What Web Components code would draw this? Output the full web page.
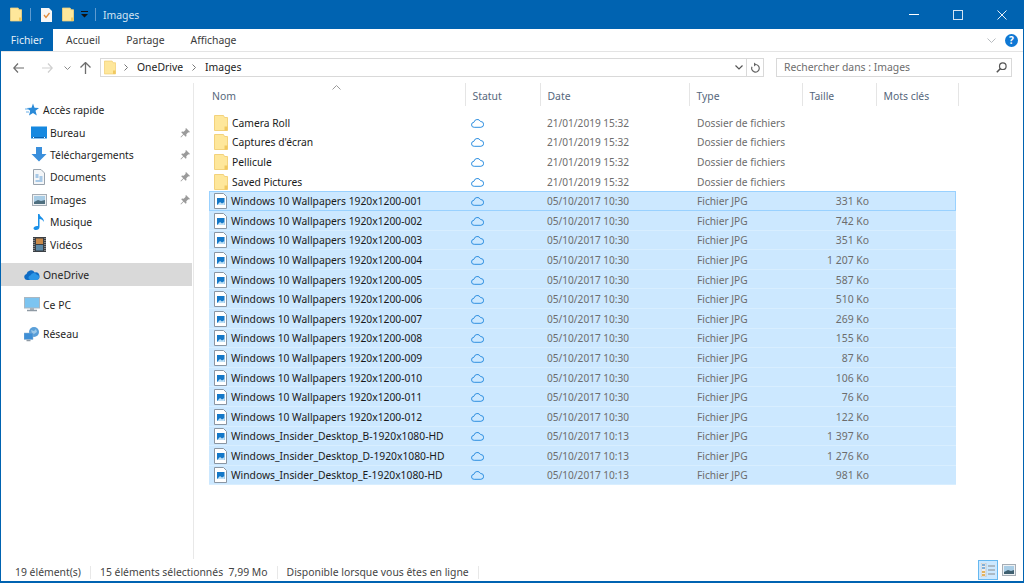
<!DOCTYPE html>
<html lang="fr">
<head>
<meta charset="utf-8">
<title>Images</title>
<style>
  html, body { margin: 0; height: 100%; background: #fff; overflow: hidden; }
  body { font: 10.4px "Noto Sans", "Open Sans", sans-serif; color: #1a1a1a; }
</style>
</head>
<body>
<explorer-window>
  <title-bar>Images</title-bar>
  <ribbon-tabs></ribbon-tabs>
  <address-row></address-row>
  <nav-pane slot="body">
    <nav-item icon="star" level="0">Accès rapide</nav-item>
    <nav-item icon="desktop" level="1" pinned>Bureau</nav-item>
    <nav-item icon="download" level="1" pinned>Téléchargements</nav-item>
    <nav-item icon="docs" level="1" pinned>Documents</nav-item>
    <nav-item icon="pics" level="1" pinned>Images</nav-item>
    <nav-item icon="music" level="1">Musique</nav-item>
    <nav-item icon="film" level="1">Vidéos</nav-item>
    <nav-item icon="cloud" level="0" active class="gap">OneDrive</nav-item>
    <nav-item icon="pc" level="0" class="gap">Ce PC</nav-item>
    <nav-item icon="net" level="0" class="gap">Réseau</nav-item>
  </nav-pane>
  <file-list slot="list"></file-list>
  <status-bar slot="status"></status-bar>
</explorer-window>

<script>
// icons shared by the elements
const FOLDER = `<svg width="14" height="16" viewBox="0 0 14 16"><path d="M.5.5h9l1 2h3v13H.5z" fill="#fee79b" stroke="#f3d27c"/><path d="M10.500 11.500h3v4h-3z" fill="#f0c860"/></svg>`;
const SMALL_FOLDER = FOLDER.replace('width="14" height="16"', 'width="12" height="15"');
const JPG = `<svg width="13" height="16" viewBox="0 0 13 16"><path d="M.5.5h9l3 3v12H.5z" fill="#fff" stroke="#8a96a3"/><rect x="3" y="5" width="7.500" height="7" fill="#1478c8"/><path d="M3 12l3-3 2 1.500 2.500-1.500v3z" fill="#bfe0f5"/></svg>`;
const CLOUD = `<svg width="13" height="10" viewBox="0 0 13 10"><path d="M3.200 9.300a2.500 2.500 0 0 1-.3-5A3.500 3.500 0 0 1 9.500 3.500a2.900 2.900 0 0 1 .4 5.800z" fill="none" stroke="#2f8fe0"/></svg>`;
const CHEVRON = `<svg width="4" height="7" viewBox="0 0 4 7"><path d="M.5.500l3 3-3 3" fill="none" stroke="#777"/></svg>`;
const ICONS = {
  star: `<svg width="14" height="14" viewBox="0 0 14 14"><path d="M8 .5l1.500 4.300L14 5l-3.500 2.800 1.300 4.700L8 10l-4 2.500 1.200-4.700L1.800 5l4.700-.2z" fill="#2a8ad8"/><path d="M0 6h4M1 9h3" stroke="#6ab0e8"/></svg>`,
  desktop: `<svg width="16" height="13" viewBox="0 0 16 13"><rect width="16" height="12" y=".5" fill="#1588e0"/><path d="M1 11.500h14" stroke="#0a62b0"/><path d="M2 11.500h1M13 11.500h1" stroke="#fff"/></svg>`,
  download: `<svg width="16" height="15" viewBox="0 0 16 15"><path d="M5 0h6v7h4.500L8 14.500.5 7H5z" fill="#3a8fdc"/></svg>`,
  docs: `<svg width="12" height="16" viewBox="0 0 12 16"><path d="M.5.5h7.500l3.500 3.500v11.500H.5z" fill="#f4f6f8" stroke="#98a2ac"/><path d="M2.500 6h3M6.500 8h3M2.500 8h3M6.500 10h3M2.500 12h7" stroke="#5b9bd5"/></svg>`,
  pics: `<svg width="15" height="12" viewBox="0 0 15 12"><rect x=".5" y=".5" width="14" height="11" fill="#eef1f3" stroke="#a5adb5"/><rect x="2" y="2" width="11" height="8" fill="#a9cde6"/><path d="M2 8l4-2 3 1 4-1v4H2z" fill="#4f6f7f"/></svg>`,
  music: `<svg width="12" height="16" viewBox="0 0 12 16"><path d="M5 0h1.500c.3 3 4.500 3.500 4.500 8-1-2-2.800-2.900-4.500-3v8c0 1.700-1.500 3-3.500 3-1.500 0-2.500-.8-2.500-1.800C.5 12.800 2.800 11.500 5 12z" fill="#1a90e8"/></svg>`,
  film: `<svg width="13" height="15" viewBox="0 0 13 15"><rect width="13" height="15" fill="#3a3f44"/><rect x="3" y="1.500" width="7" height="5.500" fill="#c98a4a"/><rect x="3" y="8" width="7" height="5.500" fill="#5d8aa8"/><path d="M1 1v13M12 1v13" stroke="#ccc" stroke-dasharray="1 1"/></svg>`,
  cloud: `<svg width="16" height="11" viewBox="0 0 16 11"><path d="M3 11a3 3 0 0 1-.5-5.900A4.500 4.500 0 0 1 10.700 3.400 3.800 3.800 0 0 1 12.500 11z" fill="#0f6cc4"/><path d="M6 11a2.500 2.500 0 0 1 .6-4.800 3.500 3.500 0 0 1 6.300-.5A2.700 2.700 0 0 1 13 11z" fill="#2b96e6"/></svg>`,
  pc: `<svg width="16" height="15" viewBox="0 0 16 15"><rect x=".5" y=".5" width="15" height="10.500" fill="#7cc4f0" stroke="#a9b7c2"/><path d="M6 11h4v2H6z" fill="#aab4bc"/><path d="M3 13.500h10" stroke="#8f9aa4" stroke-width="1.500"/></svg>`,
  net: `<svg width="16" height="15" viewBox="0 0 16 15"><circle cx="10" cy="5" r="5" fill="#5a9fd8"/><path d="M7 3l3 1 2-2 1 3-3 2-2-1z" fill="#9cc9ea"/><rect x="0" y="6" width="9" height="6.500" fill="#3f8fd6" stroke="#8fb4d2" stroke-width=".5"/><path d="M2.500 13.500h4" stroke="#8f9aa4" stroke-width="1.500"/></svg>`
};
const PIN = `<svg width="10" height="10" viewBox="0 0 10 10"><path d="M6 0l4 4-1 .6-.7-.3-2 2 .2 1.700-.8.8-2-2L1 9.500.5 9l2.700-2.700-2-2 .8-.8 1.700.2 2-2-.3-.7z" fill="#9a9a9a"/></svg>`;

class ExplorerWindow extends HTMLElement {
  constructor() {
    super();
    this.attachShadow({mode: 'open'}).innerHTML = `
    <style>
      :host { display: flex; flex-direction: column; box-sizing: border-box; height: 583px; width: 1024px; border: solid #0063b1; border-width: 0 1px 2px 1px; background: #fff; }
      .main { flex: 1; display: flex; min-height: 0; }
    </style>
    <slot></slot>
    <div class="main"><slot name="body"></slot><slot name="list"></slot></div>
    <slot name="status"></slot>`;
  }
}

class TitleBar extends HTMLElement {
  constructor() {
    super();
    this.attachShadow({mode: 'open'}).innerHTML = `
    <style>
      :host { display: flex; align-items: center; height: 29px; margin: 0 -1px; padding-left: 10px; background: #0063b1; color: #d4e4f2; flex: none; }
      .f { display: flex; }
      .sep { width: 1px; height: 13px; background: #5f9bd0; }
      .win { margin-left: auto; display: flex; align-items: center; }
      .win span { width: 44px; display: flex; justify-content: center; }
      .title { margin-left: 7px; }
    </style>
    <span class="f">${SMALL_FOLDER}</span>
    <span class="sep" style="margin-left:8px"></span>
    <span class="f" style="margin-left:10px"><svg width="11" height="15" viewBox="0 0 11 15"><path d="M0 1h8l3 3v11H0z" fill="#f6f6f6"/><path d="M3 8l2 2.500L8.500 6" fill="none" stroke="#e08a3a" stroke-width="1.300"/></svg></span>
    <span class="f" style="margin-left:10px">${SMALL_FOLDER}</span>
    <svg style="margin-left:7px" width="7" height="7" viewBox="0 0 7 7"><path d="M0 0h7v1H0zM0 3h7L3.500 6.500z" fill="#111"/></svg>
    <span class="sep" style="margin-left:7px"></span>
    <span class="title"><slot></slot></span>
    <span class="win">
      <span><svg width="10" height="1"><rect width="10" height="1" fill="#fff"/></svg></span>
      <span><svg width="10" height="10"><rect x=".5" y=".5" width="9" height="9" fill="none" stroke="#d4e4f2"/></svg></span>
      <span><svg width="10" height="10"><path d="M.5.5l9 9M9.500.5l-9 9" stroke="#e8f0f8"/></svg></span>
    </span>`;
  }
}

class RibbonTabs extends HTMLElement {
  constructor() {
    super();
    this.attachShadow({mode: 'open'}).innerHTML = `
    <style>
      :host { display: flex; align-items: center; gap: 26px; height: 22px; flex: none; border-bottom: 1px solid #e4e4e4; color: #3a3a3a; }
      .file { align-self: stretch; width: 52px; margin-right: -13px; display: flex; align-items: center; justify-content: center; background: #0063b1; color: #e6eff7; }
      .right { margin-left: auto; display: flex; align-items: center; gap: 9px; padding-right: 5px; }
      .help { width: 13px; height: 13px; border-radius: 50%; background: #0f78d4; color: #fff; font: bold 10px/13px "Noto Sans", sans-serif; text-align: center; }
    </style>
    <span class="file">Fichier</span>
    <span>Accueil</span>
    <span>Partage</span>
    <span>Affichage</span>
    <span class="right">
      <svg width="9" height="5" viewBox="0 0 9 5"><path d="M.5.500l4 4 4-4" fill="none" stroke="#b8bcc0"/></svg>
      <span class="help">?</span>
    </span>`;
  }
}

class AddressRow extends HTMLElement {
  constructor() {
    super();
    this.attachShadow({mode: 'open'}).innerHTML = `
    <style>
      :host { display: flex; align-items: center; height: 31px; flex: none; color: #222; }
      .nav { width: 99px; height: 20px; display: flex; align-items: center; padding-left: 12px; box-sizing: border-box; }
      .box { height: 19px; border: 1px solid #d9d9d9; display: flex; align-items: center; line-height: 17px; }
      .path { width: 664px; box-sizing: border-box; padding-left: 3px; }
      .chev { display: flex; margin: 0 9px 0 8px; }
      .chev + span + .chev { margin: 0 9px; }
      .end { margin-left: auto; display: flex; align-items: center; align-self: stretch; }
      .end span { display: flex; align-items: center; justify-content: center; }
      .search { width: 236px; box-sizing: border-box; margin-left: 12px; padding: 0 4px 0 7px; color: #6d6d6d; justify-content: space-between; }
      .lbl { padding-bottom: 1px; }
    </style>
    <span class="nav">
      <svg width="11" height="10" viewBox="0 0 11 10"><path d="M5 .5L.8 5 5 9.500M1 5h10" fill="none" stroke="#6d6d6d" stroke-width="1.200"/></svg>
      <svg style="margin-left:18px" width="11" height="10" viewBox="0 0 11 10"><path d="M6 .5L10.200 5 6 9.500M10 5H0" fill="none" stroke="#cfcfcf" stroke-width="1.200"/></svg>
      <svg style="margin-left:11px" width="7" height="4" viewBox="0 0 7 4"><path d="M.5.500l3 3 3-3" fill="none" stroke="#8a8a8a"/></svg>
      <svg style="margin-left:9px" width="11" height="12" viewBox="0 0 11 12"><path d="M.5 5.500l5-5 5 5M5.500 1v11" fill="none" stroke="#6d6d6d" stroke-width="1.300"/></svg>
    </span>
    <span class="box path">
      ${SMALL_FOLDER}
      <span class="chev">${CHEVRON}</span>
      <span class="lbl">OneDrive</span>
      <span class="chev">${CHEVRON}</span>
      <span class="lbl">Images</span>
      <span class="end">
        <span style="width:14px"><svg width="8" height="5" viewBox="0 0 8 5"><path d="M.5.500L4 4 7.500.500" fill="none" stroke="#555" stroke-width="1.200"/></svg></span>
        <span style="width:16px;border-left:1px solid #d9d9d9;align-self:stretch"><svg width="10" height="11" viewBox="0 0 10 11"><path d="M5.500 2.500a3.800 3.800 0 1 1-3.500 2.200" fill="none" stroke="#666" stroke-width="1.200"/><path d="M4 .5l2.500 2L4 4.500z" fill="#666"/></svg></span>
      </span>
    </span>
    <span class="box search"><span class="lbl">Rechercher dans : Images</span>
      <svg width="11" height="11" viewBox="0 0 11 11"><circle cx="6.800" cy="4.200" r="3.300" fill="none" stroke="#555" stroke-width="1.200"/><path d="M4.500 6.500L.8 10.200" stroke="#555" stroke-width="1.600"/></svg>
    </span>`;
  }
}

class NavPane extends HTMLElement {
  constructor() {
    super();
    this.attachShadow({mode: 'open'}).innerHTML = `
    <style>
      :host { display: block; width: 193px; height: 100%; box-sizing: border-box; padding-top: 16px; border-right: 1px solid #e8e8e8; }
      ::slotted(.gap) { margin-top: 7.6px; }
    </style>
    <slot></slot>`;
  }
}

class NavItem extends HTMLElement {
  connectedCallback() {
    const level = this.getAttribute('level') || 0;
    const icon = ICONS[this.getAttribute('icon')];
    this.attachShadow({mode: 'open'}).innerHTML = `
    <style>
      :host { display: flex; align-items: center; height: 22.4px; width: 191px; color: #1f1f1f; }
      :host([active]) { background: #d9d9d9; }
      .ic { width: 16px; display: flex; justify-content: center; margin-left: ${level == 1 ? 30 : 23}px; margin-right: 3px; }
      .pin { margin-left: auto; margin-right: 2px; display: flex; }
    </style>
    <span class="ic">${icon}</span><slot></slot>
    ${this.hasAttribute('pinned') ? `<span class="pin">${PIN}</span>` : ''}`;
  }
}

// columns of the details view, shared by the header and the rows
const COLUMNS = '257px 75px 149px 113px 74px';

class FileRow extends HTMLElement {
  connectedCallback() {
    const folder = this.getAttribute('kind') === 'folder';
    this.attachShadow({mode: 'open'}).innerHTML = `
    <style>
      :host { display: grid; grid-template-columns: ${COLUMNS} 79px; align-items: center; box-sizing: border-box; height: 19.6px; width: 747px; color: #6d6d6d; white-space: nowrap; }
      :host([selected]) { background: #cce8ff; box-shadow: inset 0 -1px 0 #d8eeff; }
      :host([focus]) { box-shadow: inset 0 0 0 1px #99d1ff; }
      .name { display: flex; align-items: center; gap: 4px; color: #1a1a1a; padding-left: 5px; font-size: 10.3px; }
      .name svg { flex: none; }
      .st { display: flex; padding-left: 5px; }
      .size { text-align: right; padding-right: 8px; }
      .date { padding-left: 6px; font-size: 10.1px; }
      .type { padding-left: 7px; font-size: 10.2px; }
    </style>
    <span class="name">${folder ? FOLDER : JPG}<span><slot></slot></span></span>
    <span class="st">${CLOUD}</span>
    <span class="date">${this.getAttribute('date')}</span>
    <span class="type">${folder ? 'Dossier de fichiers' : 'Fichier JPG'}</span>
    <span class="size">${this.getAttribute('size') || ''}</span>`;
  }
}

class FileList extends HTMLElement {
  constructor() {
    super();
    const heads = ['Nom', 'Statut', 'Date', 'Type', 'Taille', 'Mots clés'];
    this.attachShadow({mode: 'open'}).innerHTML = `
    <style>
      :host { display: block; flex: 1; padding-left: 15px; position: relative; }
      .head { display: grid; grid-template-columns: ${COLUMNS} 82px; height: 23px; margin-bottom: 7px; color: #56677c; }
      .head span { display: flex; align-items: center; padding: 2px 0 0 6.5px; border-right: 1px solid #e5e5e5; }
      .head span:first-child { padding-left: 3px; }
      .sort { position: absolute; left: 138px; top: 2px; }
    </style>
    <div class="head">${heads.map(h => `<span>${h}</span>`).join('')}</div>
    <svg class="sort" width="9" height="5" viewBox="0 0 9 5"><path d="M.5 4.500l4-4 4 4" fill="none" stroke="#9a9a9a"/></svg>
    <slot></slot>`;
    const folders = ['Camera Roll', "Captures d'écran", 'Pellicule', 'Saved Pictures'];
    const files = [
      ['Windows 10 Wallpapers 1920x1200-001', '331 Ko'], ['Windows 10 Wallpapers 1920x1200-002', '742 Ko'],
      ['Windows 10 Wallpapers 1920x1200-003', '351 Ko'], ['Windows 10 Wallpapers 1920x1200-004', '1 207 Ko'],
      ['Windows 10 Wallpapers 1920x1200-005', '587 Ko'], ['Windows 10 Wallpapers 1920x1200-006', '510 Ko'],
      ['Windows 10 Wallpapers 1920x1200-007', '269 Ko'], ['Windows 10 Wallpapers 1920x1200-008', '155 Ko'],
      ['Windows 10 Wallpapers 1920x1200-009', '87 Ko'], ['Windows 10 Wallpapers 1920x1200-010', '106 Ko'],
      ['Windows 10 Wallpapers 1920x1200-011', '76 Ko'], ['Windows 10 Wallpapers 1920x1200-012', '122 Ko']
    ];
    const insider = [['B', '1 397 Ko'], ['D', '1 276 Ko'], ['E', '981 Ko']];
    folders.forEach(name => this.addRow(name, {kind: 'folder', date: '21/01/2019 15:32'}));
    files.forEach((f, i) => this.addRow(f[0], {date: '05/10/2017 10:30', size: f[1], selected: '', ...(i === 0 ? {focus: ''} : {})}));
    insider.forEach(f => this.addRow(`Windows_Insider_Desktop_${f[0]}-1920x1080-HD`, {date: '05/10/2017 10:13', size: f[1], selected: ''}));
  }

  addRow(name, attrs) {
    const row = document.createElement('file-row');
    Object.keys(attrs).forEach(k => row.setAttribute(k, attrs[k]));
    row.textContent = name;
    this.appendChild(row);
  }
}

class StatusBar extends HTMLElement {
  constructor() {
    super();
    this.attachShadow({mode: 'open'}).innerHTML = `
    <style>
      :host { display: flex; align-items: center; height: 22px; flex: none; color: #444; }
      .t { display: flex; align-items: center; height: 13px; margin-top: 4px; padding-right: 9px; margin-left: 9px; border-right: 1px solid #e8e8e8; white-space: pre; }
      .views { margin-left: auto; display: flex; align-items: center; gap: 4px; padding-right: 7px; }
      .cur { display: flex; padding: 2px; background: #cce8ff; border: 1px solid #66b8f0; }
    </style>
    <span class="t" style="margin-left:14px">19 élément(s)</span>
    <span class="t">15 éléments sélectionnés  7,99 Mo</span>
    <span class="t">Disponible lorsque vous êtes en ligne</span>
    <span class="views">
      <span class="cur"><svg width="14" height="14" viewBox="0 0 14 14"><rect width="5" height="14" fill="#eee" stroke="#aaa" stroke-width=".5"/><path d="M1 2h3M1 5h3" stroke="#5b9bd5" stroke-width="1.500"/><path d="M1 9h3M1 12h3" stroke="#e0a030" stroke-width="1.500"/><path d="M7 3h7M7 7h7M7 11h7" stroke="#8a8a8a"/></svg></span>
      <svg width="14" height="12" viewBox="0 0 14 12"><rect x=".5" y=".5" width="13" height="11" fill="#eef1f3" stroke="#a5adb5"/><rect x="2" y="2" width="10" height="8" fill="#a9cde6"/><path d="M2 8l4-2 3 1 3-1v4H2z" fill="#3f5f6f"/></svg>
    </span>`;
  }
}

customElements.define('explorer-window', ExplorerWindow);
customElements.define('title-bar', TitleBar);
customElements.define('ribbon-tabs', RibbonTabs);
customElements.define('address-row', AddressRow);
customElements.define('nav-pane', NavPane);
customElements.define('nav-item', NavItem);
customElements.define('file-row', FileRow);
customElements.define('file-list', FileList);
customElements.define('status-bar', StatusBar);
</script>
</body>
</html>
